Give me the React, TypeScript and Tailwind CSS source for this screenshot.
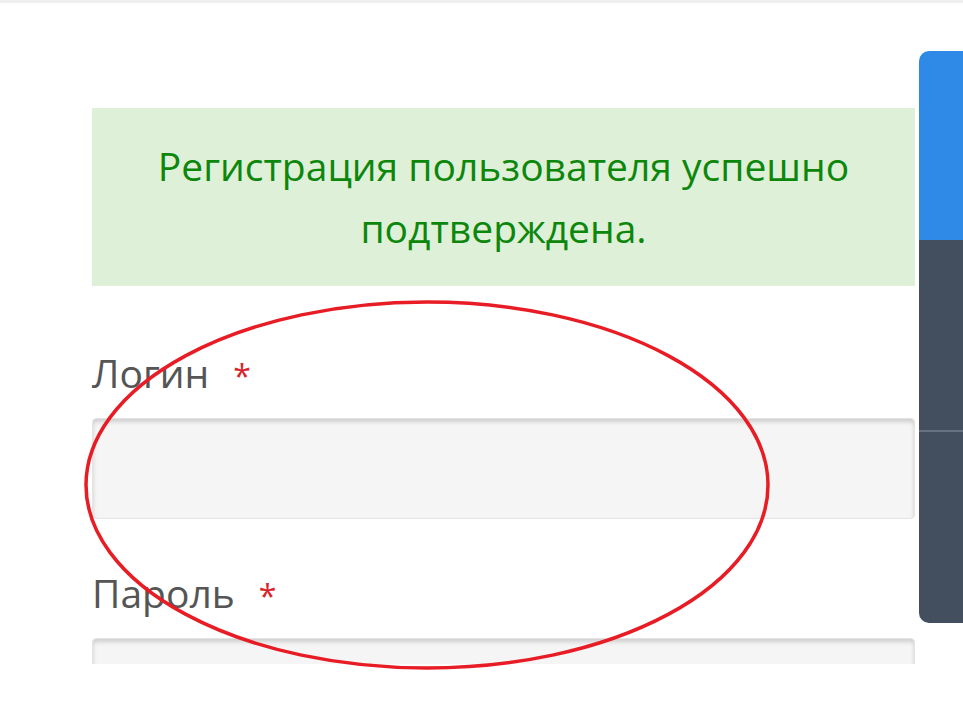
export default function App() {
    return (
        <div
            className="relative w-[963px] h-[704px] overflow-hidden bg-white"
            style={{ fontFamily: '"Open Sans", "Noto Sans", sans-serif' }}
        >
            {/* page, cut off like the original screenshot */}
            <div className="h-[664px] overflow-hidden">
                <div className="h-[3px] bg-[#efefef]" />

                <div className="pl-[92px] pr-[48px] pt-[105px]">
                    {/* success alert */}
                    <div className="bg-[#dff0d8] h-[178px] flex items-center justify-center px-10">
                        <p className="text-center text-[#0c870c] text-[39px] leading-[62px]">
                            Регистрация пользователя успешно подтверждена.
                        </p>
                    </div>

                    {/* login */}
                    <div className="mt-[58px]">
                        <label className="block text-[#555] text-[39px] leading-[57px]">
                            Логин
                            <span className="ml-[24px] text-[#d9262c] text-[32px]">*</span>
                        </label>
                        <div className="mt-[14px] h-[101px] rounded bg-[#f5f5f5] border border-[#e4e4e4] shadow-[inset_0_3px_4px_rgba(0,0,0,0.16)]" />
                    </div>

                    {/* password */}
                    <div className="mt-[45px]">
                        <label className="block text-[#555] text-[39px] leading-[57px]">
                            Пароль
                            <span className="ml-[24px] text-[#d9262c] text-[32px]">*</span>
                        </label>
                        <div className="mt-[14px] h-[101px] rounded bg-[#f5f5f5] border border-[#e4e4e4] shadow-[inset_0_3px_4px_rgba(0,0,0,0.16)]" />
                    </div>
                </div>
            </div>

            {/* floating side widget */}
            <div className="absolute right-0 top-[51px] w-[44px] h-[572px] rounded-l-[10px] overflow-hidden flex flex-col">
                <div className="h-[189px] bg-[#2e8ae6]" />
                <div className="h-[192px] bg-[#434e5f] border-b-2 border-[#687180]" />
                <div className="flex-1 bg-[#434e5f]" />
            </div>

            {/* red annotation */}
            <svg className="absolute left-0 top-0 pointer-events-none" width="963" height="704">
                <ellipse cx="427" cy="485" rx="341" ry="183" fill="none" stroke="#e81c24" strokeWidth="3.5" />
            </svg>
        </div>
    )
}
